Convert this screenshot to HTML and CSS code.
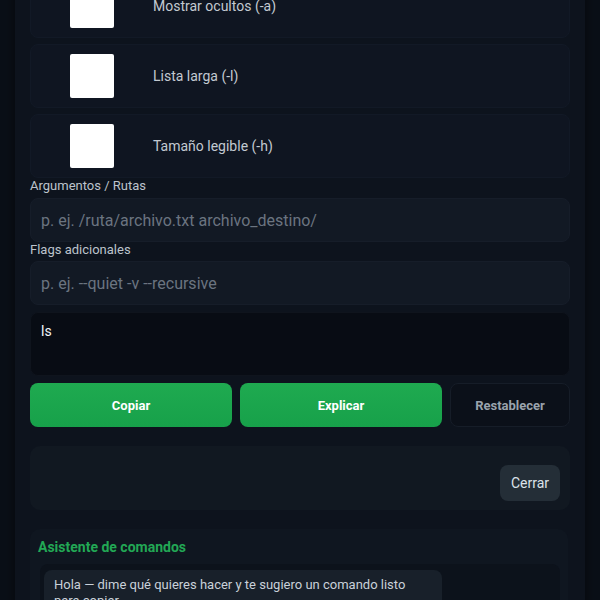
FILE: index.html
```html
<!DOCTYPE html>
<html lang="es">
<head>
<meta charset="utf-8">
<title>Constructor de comandos</title>
<link rel="stylesheet" href="styles.css">
</head>
<body>
<main class="shell">
  <div class="opt"><span class="box"></span><span class="opt-label">Ver contenido</span></div>
  <div class="opt"><span class="box"></span><span class="opt-label">Mostrar ocultos (-a)</span></div>
  <div class="opt"><span class="box"></span><span class="opt-label">Lista larga (-l)</span></div>
  <div class="opt"><span class="box"></span><span class="opt-label">Tamaño legible (-h)</span></div>

  <label class="field-label field-label-first">Argumentos / Rutas</label>
  <div class="input"><span class="ph">p. ej. /ruta/archivo.txt archivo_destino/</span></div>

  <label class="field-label">Flags adicionales</label>
  <div class="input"><span class="ph">p. ej. --quiet -v --recursive</span></div>

  <div class="output">ls</div>

  <div class="actions">
    <button class="btn green">Copiar</button>
    <button class="btn green">Explicar</button>
    <button class="btn ghost">Restablecer</button>
  </div>

  <section class="panel">
    <button class="close">Cerrar</button>
  </section>

  <section class="assistant">
    <h2 class="assistant-title">Asistente de comandos</h2>
    <div class="chat">
      <div class="bubble">Hola — dime qué quieres hacer y te sugiero un comando listo para copiar.</div>
    </div>
  </section>
</main>
</body>
</html>
```
FILE: styles.css
```css
html, body {
  margin: 0;
  padding: 0;
  background: #0a0f17;
  font-family: Roboto, "Noto Sans", "Liberation Sans", sans-serif;
}

.shell {
  margin: -96px 15px 0;
  padding: 0 15px 40px;
  background: #0d131d;
  box-shadow: 0 0 12px rgba(0, 0, 0, 0.5);
  display: flex;
  flex-direction: column;
}

.opt {
  height: 64px;
  flex: none;
  box-sizing: border-box;
  margin-bottom: 6px;
  background: #0f1521;
  border: 1px solid #121926;
  border-radius: 8px;
  display: flex;
  align-items: center;
  padding-left: 39px;
}

.opt:nth-child(4) {
  margin-bottom: 0;
}

.box {
  width: 44px;
  height: 44px;
  background: #ffffff;
  border-radius: 2px;
  flex: none;
}

.opt-label {
  margin-left: 39px;
  color: #c3c9d1;
  font-size: 14px;
}

.field-label {
  display: block;
  color: #bcc3cc;
  font-size: 13px;
  line-height: 15px;
  margin-bottom: 4px;
}

.field-label-first {
  margin-bottom: 5px;
}

.input {
  height: 44px;
  flex: none;
  box-sizing: border-box;
  background: #121924;
  border: 1px solid #161d29;
  border-radius: 8px;
  display: flex;
  align-items: center;
  padding-left: 10px;
}

.ph {
  color: #6b7480;
  font-size: 16px;
}

.output {
  margin-top: 7px;
  height: 64px;
  flex: none;
  box-sizing: border-box;
  background: #080c14;
  border: 1px solid #0f141d;
  border-radius: 8px;
  padding: 9px 10px;
  color: #f1f4f7;
  font-size: 14px;
  line-height: 18px;
}

.actions {
  margin-top: 7px;
  display: grid;
  grid-template-columns: 1fr 1fr 120px;
  gap: 8px;
}

.btn {
  height: 44px;
  border-radius: 8px;
  font-family: inherit;
  font-size: 13px;
  font-weight: 700;
  cursor: pointer;
}

.green {
  border: none;
  color: #ffffff;
  background: linear-gradient(180deg, #1faa50 0%, #17a14a 100%);
}

.ghost {
  background: #0b1019;
  border: 1px solid #161d28;
  color: #9aa3ad;
}

.panel {
  margin-top: 19px;
  height: 64px;
  flex: none;
  box-sizing: border-box;
  background: #111821;
  border-radius: 10px;
  display: flex;
  justify-content: flex-end;
  align-items: flex-end;
  padding: 0 10px 9px;
}

.close {
  width: 60px;
  height: 36px;
  border: none;
  border-radius: 8px;
  background: #242e37;
  color: #dce3ea;
  font-family: inherit;
  font-size: 14px;
}

.assistant {
  margin-top: 19px;
  margin-right: 2px;
  background: #0f1620;
  border-radius: 10px;
  padding: 9px 8px 10px;
}

.assistant-title {
  margin: 0 0 8px;
  color: #22a855;
  font-size: 14px;
  font-weight: 700;
  line-height: 18px;
}

.chat {
  background: #0c121b;
  border-radius: 8px;
  padding: 6px 4px;
  margin: 0 0 0 2px;
}

.bubble {
  max-width: 398px;
  box-sizing: border-box;
  background: #18202a;
  border-radius: 8px;
  padding: 7px 10px;
  color: #c9d1d9;
  font-size: 13px;
  line-height: 16px;
}
```
